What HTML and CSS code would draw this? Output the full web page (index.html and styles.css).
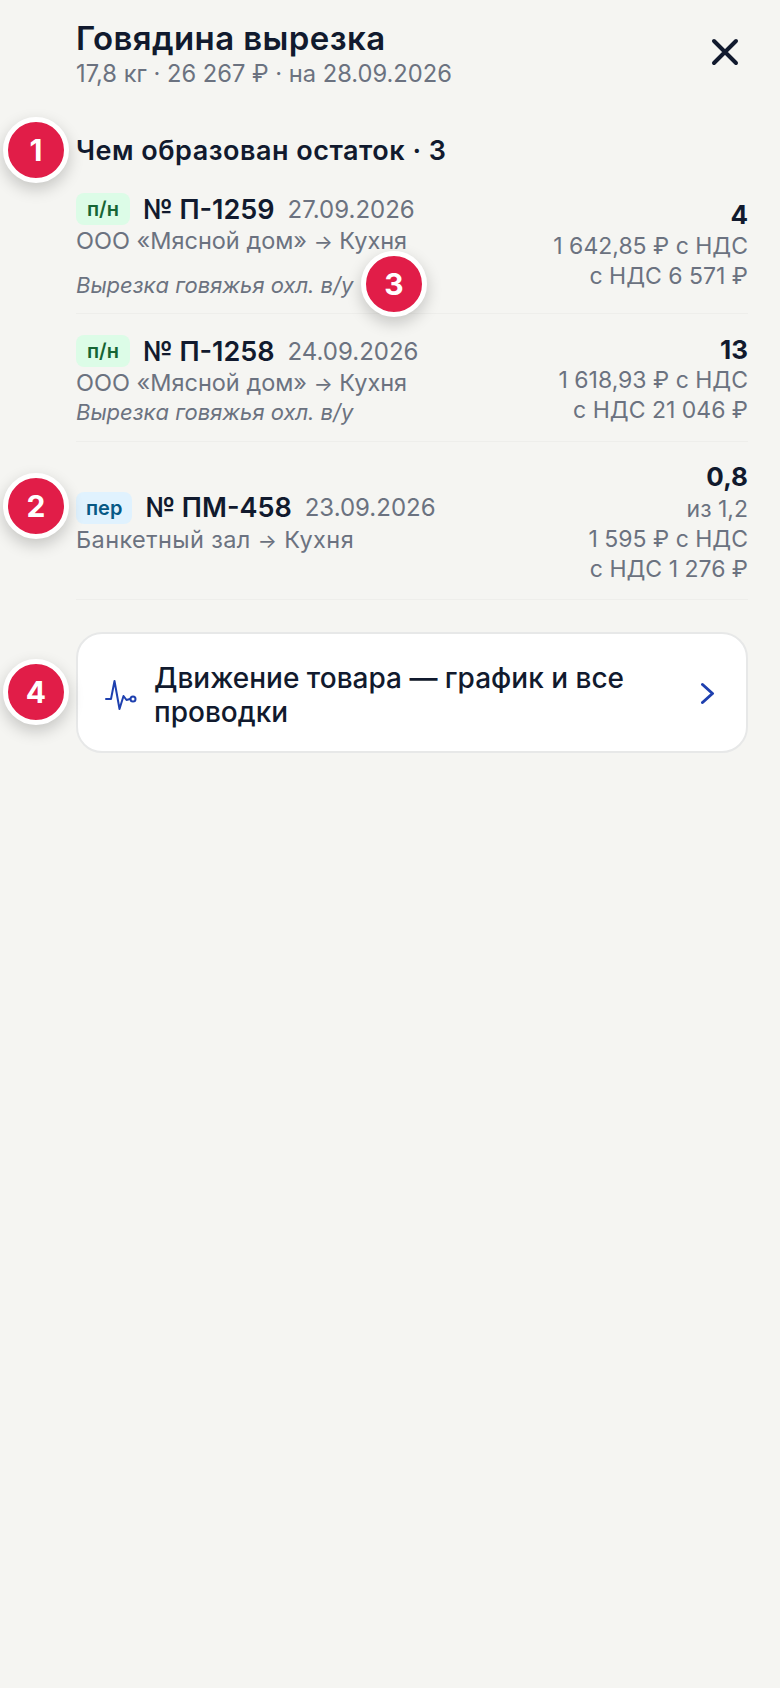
FILE: index.html
```html
<!DOCTYPE html>
<html lang="ru">

<head>
    <meta charset="UTF-8">
    <meta name="viewport" content="width=device-width, initial-scale=1.0">
    <title>Говядина вырезка</title>
    <link rel="stylesheet" href="styles.css">
</head>

<body>
    <div class="sheet">
        <div class="head">
            <div>
                <h1 class="title">Говядина вырезка</h1>
                <div class="sub">17,8 кг · 26 267 ₽ · на 28.09.2026</div>
            </div>
            <svg class="close" width="28" height="28" viewBox="0 0 28 28" fill="none" stroke="#111a2e" stroke-width="4" stroke-linecap="round">
                <path d="M3 3L25 25M25 3L3 25" />
            </svg>
        </div>

        <h2 class="section">Чем образован остаток · 3</h2>

        <div class="row row-first">
            <div class="info">
                <div class="line">
                    <span class="badge badge-green">п/н</span>
                    <span class="num">№ П-1259</span>
                    <span class="date">27.09.2026</span>
                </div>
                <div class="route">ООО «Мясной дом» <span class="arrow">→</span> Кухня</div>
                <div class="note note-far">Вырезка говяжья охл. в/у</div>
            </div>
            <div class="amounts">
                <div class="qty">4</div>
                <div class="price">1 642,85 ₽ с НДС</div>
                <div class="price">с НДС 6 571 ₽</div>
            </div>
        </div>

        <div class="row">
            <div class="info">
                <div class="line">
                    <span class="badge badge-green">п/н</span>
                    <span class="num">№ П-1258</span>
                    <span class="date">24.09.2026</span>
                </div>
                <div class="route">ООО «Мясной дом» <span class="arrow">→</span> Кухня</div>
                <div class="note">Вырезка говяжья охл. в/у</div>
            </div>
            <div class="amounts">
                <div class="qty">13</div>
                <div class="price">1 618,93 ₽ с НДС</div>
                <div class="price">с НДС 21 046 ₽</div>
            </div>
        </div>

        <div class="row row-center">
            <div class="info">
                <div class="line">
                    <span class="badge badge-blue">пер</span>
                    <span class="num">№ ПМ-458</span>
                    <span class="date">23.09.2026</span>
                </div>
                <div class="route route-wide">Банкетный зал <span class="arrow">→</span> Кухня</div>
            </div>
            <div class="amounts">
                <div class="qty">0,8</div>
                <div class="price">из 1,2</div>
                <div class="price">1 595 ₽ с НДС</div>
                <div class="price">с НДС 1 276 ₽</div>
            </div>
        </div>

        <div class="card">
            <svg class="pulse" width="34" height="34" viewBox="0 0 34 34" fill="none" stroke="#1e40af" stroke-width="2" stroke-linecap="round" stroke-linejoin="round">
                <path d="M1 23H6L9.500 5L14.500 33L18.500 20L21.500 24L25 23" />
                <circle cx="28" cy="23" r="2.500" />
            </svg>
            <div class="card-text">Движение товара — график и все проводки</div>
            <svg class="chev" width="16" height="24" viewBox="0 0 16 24" fill="none" stroke="#1e40af" stroke-width="3" stroke-linecap="round" stroke-linejoin="round">
                <path d="M1.500 3.500L11.500 12.500L1.500 21.500" />
            </svg>
        </div>
    </div>

    <div class="mark mark-1">1</div>
    <div class="mark mark-2">2</div>
    <div class="mark mark-3">3</div>
    <div class="mark mark-4">4</div>
</body>

</html>
```

FILE: styles.css
```css
* {
    margin: 0;
    padding: 0;
    box-sizing: border-box;
}

html,
body {
    height: 100%;
}

body {
    background: #f5f5f2;
    color: #111a2e;
    font-family: Inter, "Noto Sans", sans-serif;
}

.sheet {
    padding: 18px 32px 0 76px;
}

.head {
    display: flex;
    justify-content: space-between;
    align-items: flex-start;
}

.title {
    font-size: 33px;
    font-weight: 600;
    letter-spacing: 0.4px;
    line-height: 41px;
}

.sub {
    font-size: 23.700px;
    line-height: 30px;
    color: #6b7280;
}

.close {
    margin-top: 20px;
    margin-right: 9px;
}

.section {
    margin-top: 45px;
    font-size: 27px;
    font-weight: 600;
    letter-spacing: 0.5px;
    line-height: 34px;
}

.row {
    display: flex;
    justify-content: space-between;
    padding: 21px 0 15px;
    border-bottom: 1px solid #eeeeeb;
}

.row .amounts {
    margin-top: -1px;
}

.row-first {
    padding: 25px 0 14px;
}

.row-first .amounts {
    margin-top: 6px;
}

.row-first .qty {
    margin-bottom: 1px;
}

.row-center {
    align-items: center;
    padding: 20px 0 15px;
}

.row-center .qty {
    margin-bottom: 2px;
}

.line {
    display: flex;
    align-items: center;
    gap: 13px;
    height: 32px;
}

.badge {
    padding: 0 10px;
    height: 32px;
    line-height: 32px;
    border-radius: 8px;
    font-size: 20px;
    font-weight: 600;
}

.badge-green {
    padding: 0 11px;
    background: #dcfce7;
    color: #166534;
}

.badge-blue {
    background: #e0f2fe;
    color: #075985;
}

.num {
    font-size: 27px;
    font-weight: 600;
}

.date {
    font-size: 24px;
    color: #6b7280;
}

.route {
    margin-top: 1px;
    font-size: 23.500px;
    line-height: 30px;
    color: #6b7280;
}

.route-wide {
    letter-spacing: 0.4px;
}

.arrow {
    font-size: 20px;
    line-height: 1;
}

.note {
    font-size: 22px;
    font-style: italic;
    line-height: 28px;
    color: #6b7280;
}

.note-far {
    margin-top: 15px;
}

.amounts {
    text-align: right;
}

.qty {
    font-size: 26px;
    font-weight: 700;
    line-height: 31px;
}

.price {
    font-size: 23px;
    line-height: 30px;
    color: #6b7280;
}

.card {
    display: flex;
    align-items: center;
    gap: 15px;
    height: 121px;
    margin-top: 32px;
    padding: 0 27px;
    background: #fff;
    border: 2px solid #e7e8e8;
    border-radius: 26px;
}

.card-text {
    flex: 1;
    padding-top: 4px;
    font-size: 28px;
    font-weight: 500;
    line-height: 34px;
}

.chev {
    margin-left: 30px;
    margin-right: 2px;
}

.mark {
    position: absolute;
    width: 66px;
    height: 66px;
    border: 5px solid #fff;
    border-radius: 50%;
    background: #e11d48;
    color: #fff;
    font-size: 30px;
    font-weight: 700;
    line-height: 56px;
    text-align: center;
    box-shadow: 0 6px 16px rgba(0, 0, 0, 0.2);
}

.mark-1 {
    left: 3px;
    top: 117px;
}

.mark-2 {
    left: 3px;
    top: 473px;
}

.mark-3 {
    left: 361px;
    top: 251px;
}

.mark-4 {
    left: 3px;
    top: 659px;
}
```
